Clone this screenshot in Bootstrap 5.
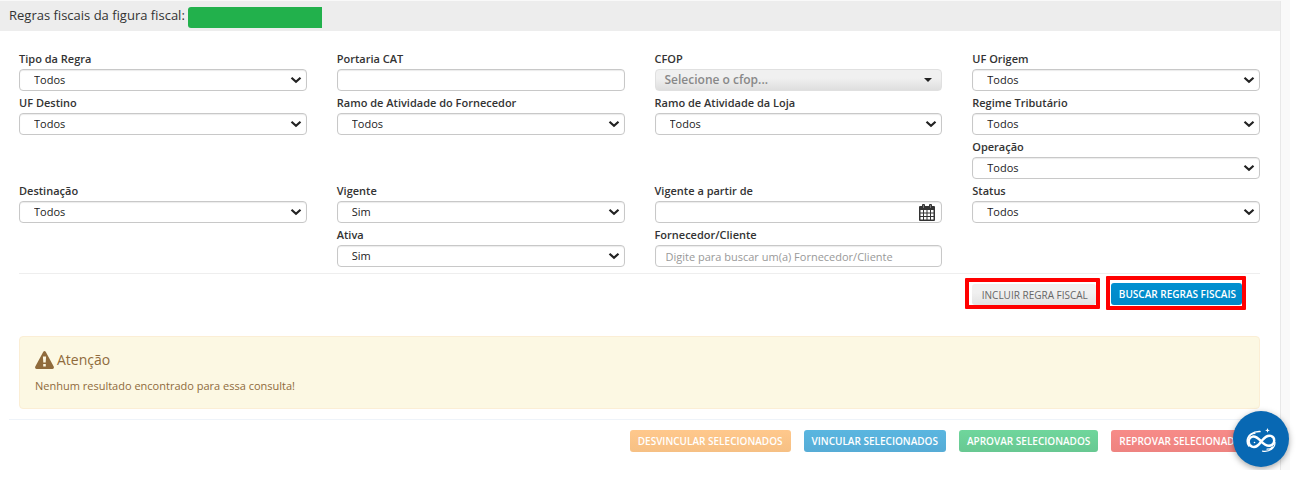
<!DOCTYPE html>
<html lang="pt-BR">
<head>
<meta charset="utf-8">
<meta name="viewport" content="width=device-width, initial-scale=1">
<title>Regras fiscais</title>
<link href="https://cdn.jsdelivr.net/npm/bootstrap@5.3.0/dist/css/bootstrap.min.css" rel="stylesheet">
<style>
  body { font-family: "Open Sans", "Noto Sans", sans-serif; font-size: 11px; color: #333; background: #fff; }
  .page-shell { margin-right: 7px; padding: 1px 9px 0 0; background: #f9f9f9; }
  .rules-panel { background: #fff; border-right: 1px solid #e8e8e8; padding-bottom: 18px; }
  .panel-title { background: #ededed; height: 30px; padding: 0 9px; font-size: 13px; gap: 3px; }
  .figure-name { width: 134px; height: 21px; background: #22b14c; border-radius: 3px 0 0 3px; margin-top: 3px; }
  .panel-content { padding: 16px 20px 0 19px; }
  .filters { --bs-gutter-x: 30px; }
  .form-label { display: block; margin: 0; font-weight: 600; line-height: 24px; height: 22px; color: #333; }
  .form-control, .form-select { height: 22px; min-height: 22px; padding: 0 10px; font-size: 11px; line-height: 20px; color: #222; border: 1px solid #c8c8c8; border-radius: 4px; box-shadow: inset 0 1px 1px rgba(0,0,0,.08); }
  .form-select { padding: 0 24px 0 14px; background-size: 12px 8px; background-position: right 4px top 6px;
    background-image: url("data:image/svg+xml,%3Csvg xmlns='http://www.w3.org/2000/svg' viewBox='0 0 12 8'%3E%3Cpath d='M1.5 1.7 6 5.7l4.5-4' fill='none' stroke='%23222' stroke-width='2.2'/%3E%3C/svg%3E"); }
  .form-control::placeholder { color: #999; }
  .cfop-toggle { width: 100%; height: 22px; padding: 0 9px; display: flex; align-items: center; justify-content: space-between; font-size: 12px; font-weight: 600; color: #888; border: 1px solid #e0e0e0; border-radius: 4px; background: linear-gradient(#f0f0f0 40%, #dedede); }
  .cfop-toggle::after { color: #222; border-top-width: 4px; border-left-width: 4px; border-right-width: 4px; }
  .date-field .form-control { padding-right: 28px; }
  .date-field button { right: 7px; top: 2px; width: 16px; height: 18px; line-height: 0; color: #333; }
  .rule { margin-top: 6px; border-top: 1px solid #eee; }
  .search-actions { padding-top: 2px; margin-right: 14px; gap: 6px; }
  .marked { border: 4px solid #f00; border-radius: 1px; }
  .marked-plain { margin-top: 2px; padding: 2px 0 0 3px; height: 31px; }
  .marked-main { padding: 3px 0 0 1px; height: 34px; }
  .btn-rule { height: 22px; padding: 0 8px; font-size: 10px; line-height: 22px; font-weight: 600; text-transform: uppercase; border: 0; border-radius: 3px; color: #fff; white-space: nowrap; }
  .btn-plain { height: 21px; padding: 0 8px 0 10px; font-weight: 500; color: #666; background: linear-gradient(#f0f0f0 40%, #e2e2e2); }
  .btn-main { padding: 0 6px 0 8px; background: linear-gradient(#0090d0, #0088c8); }
  .notice { margin: 26px 0 10px; padding: 12px 15px 14px; background: #fcf8e3; border: 1px solid #fbeed5; border-radius: 4px; color: #8f6b3c; }
  .notice h2 { margin: 0; font-size: 14px; font-weight: 400; line-height: 22px; gap: 3px; }
  .notice p { margin: 7px 0 0; line-height: 16px; }
  .bulk { margin-left: 9px; padding: 10px 24px 0 0; gap: 13px; border-top: 1px solid #eef3f9; }
  .btn-unlink { background: linear-gradient(#ffc88c, #f6c084); }
  .btn-link-sel { background: linear-gradient(#5ab6e0, #56acd6); }
  .btn-approve { background: linear-gradient(#6fd69c, #68c892); }
  .btn-reject { background: linear-gradient(#f78b88, #ee8380); }
  .assistant { right: 1px; bottom: 3px; width: 56px; height: 56px; background: #0868b3; box-shadow: 0 2px 6px rgba(0,0,0,.35); line-height: 0; }
</style>
</head>
<body>
<main class="page-shell position-relative">
  <section class="rules-panel">
    <header class="panel-title d-flex align-items-center"><span>Regras fiscais da figura fiscal:</span><span class="figure-name"></span></header>
    <div class="panel-content">
      <form>
        <div class="row filters">
          <div class="col-3"><label class="form-label" for="tipo">Tipo da Regra</label><select class="form-select" id="tipo"><option>Todos</option></select></div>
          <div class="col-3"><label class="form-label" for="portaria">Portaria CAT</label><input class="form-control" id="portaria" type="text"></div>
          <div class="col-3"><label class="form-label" for="cfop">CFOP</label><button class="cfop-toggle dropdown-toggle" id="cfop" type="button">Selecione o cfop...</button></div>
          <div class="col-3"><label class="form-label" for="origem">UF Origem</label><select class="form-select" id="origem"><option>Todos</option></select></div>
          <div class="col-3"><label class="form-label" for="destino">UF Destino</label><select class="form-select" id="destino"><option>Todos</option></select></div>
          <div class="col-3"><label class="form-label" for="ramof">Ramo de Atividade do Fornecedor</label><select class="form-select" id="ramof"><option>Todos</option></select></div>
          <div class="col-3"><label class="form-label" for="ramol">Ramo de Atividade da Loja</label><select class="form-select" id="ramol"><option>Todos</option></select></div>
          <div class="col-3"><label class="form-label" for="regime">Regime Tributário</label><select class="form-select" id="regime"><option>Todos</option></select></div>
          <div class="col-3 offset-9"><label class="form-label" for="operacao">Operação</label><select class="form-select" id="operacao"><option>Todos</option></select></div>
          <div class="col-3"><label class="form-label" for="destinacao">Destinação</label><select class="form-select" id="destinacao"><option>Todos</option></select></div>
          <div class="col-3"><label class="form-label" for="vigente">Vigente</label><select class="form-select" id="vigente"><option>Sim</option></select></div>
          <div class="col-3"><label class="form-label" for="apartir">Vigente a partir de</label>
            <div class="date-field position-relative"><input class="form-control" id="apartir" type="text">
              <button class="btn p-0 border-0 position-absolute" type="button" aria-label="Abrir calendário"><svg width="16" height="17" viewBox="0 0 16 17"><path fill="currentColor" d="M1 2h2V1q0-1 1-1h1q1 0 1 1v1h4V1q0-1 1-1h1q1 0 1 1v1h2q1 0 1 1v13q0 1-1 1H1q-1 0-1-1V3q0-1 1-1z"/><path fill="#fff" d="M1.500 6H4v2.500H1.500zM5 6h2.500v2.500H5zM8.500 6H11v2.500H8.500zM12 6h2.500v2.500H12zM1.500 9.500H4V12H1.500zM5 9.500h2.500V12H5zM8.500 9.500H11V12H8.500zM12 9.500h2.500V12H12zM1.500 13H4v2.500H1.500zM5 13h2.500v2.500H5zM8.500 13H11v2.500H8.500zM12 13h2.500v2.500H12z"/><path stroke="#aaa" stroke-width=".6" d="M4.500 1v3M11.500 1v3"/></svg></button></div></div>
          <div class="col-3"><label class="form-label" for="status">Status</label><select class="form-select" id="status"><option>Todos</option></select></div>
          <div class="col-3 offset-3"><label class="form-label" for="ativa">Ativa</label><select class="form-select" id="ativa"><option>Sim</option></select></div>
          <div class="col-3"><label class="form-label" for="fornecedor">Fornecedor/Cliente</label><input class="form-control" id="fornecedor" type="text" placeholder="Digite para buscar um(a) Fornecedor/Cliente"></div>
        </div>
        <div class="rule"></div>
        <div class="search-actions d-flex justify-content-end align-items-start">
          <div class="marked marked-plain"><button class="btn btn-rule btn-plain" type="button">Incluir regra fiscal</button></div>
          <div class="marked marked-main"><button class="btn btn-rule btn-main" type="submit">Buscar regras fiscais</button></div>
        </div>
      </form>
      <div class="notice" role="alert">
        <h2 class="d-flex align-items-center"><svg width="19" height="18" viewBox="0 0 19 18"><path fill="currentColor" fill-rule="evenodd" d="M8.300.8q1.200-1.500 2.400 0l8 14.700q.8 2-1.200 2.500h-16q-2-.5-1.200-2.500zM7.900 5.600l.4 6h2.400l.4-6zM8.200 13v2.600h2.600V13z"/></svg><span>Atenção</span></h2>
        <p>Nenhum resultado encontrado para essa consulta!</p>
      </div>
    </div>
    <div class="bulk d-flex justify-content-end">
      <button class="btn btn-rule btn-unlink" type="button">Desvincular selecionados</button>
      <button class="btn btn-rule btn-link-sel" type="button">Vincular selecionados</button>
      <button class="btn btn-rule btn-approve" type="button">Aprovar selecionados</button>
      <button class="btn btn-rule btn-reject" type="button">Reprovar selecionados</button>
    </div>
  </section>
  <button class="assistant btn rounded-circle p-0 border-0 position-absolute" type="button" aria-label="Assistente">
    <svg width="56" height="56" viewBox="0 0 56 56" fill="none" stroke="#fff" stroke-linecap="round"><path stroke-width="2.400" d="M28.500 30c-3.200 5-6.500 6.800-9.500 5.600-4.600-1.900-4.300-9 .6-10 3.800-.7 5.900 2.100 8.600 4.800 2.800 3 5.800 5 9.200 4.100 5-1.400 5-8.400.4-9.600-4.200-.9-6.500 2-9.300 5.100"/><path stroke-width="1.500" d="M27 20.600c-7-.3-12.800 3.800-12.800 9.600 0 1.600.5 3.500 1.600 4.700"/><path stroke-width="1.200" d="M15.500 26.500c1.200-2.400 3.900-4 6.500-4M42 31.500c0 5.500-5 9.700-12.500 8.600M39.500 36c-1.500 1.600-3.400 2.200-5.500 2.200"/><path fill="#fff" stroke="none" d="m34.500 17 .7 1.700 1.700.7-1.700.7-.7 1.700-.7-1.700-1.700-.7 1.700-.7z"/><circle cx="21.500" cy="31.500" r=".8" fill="#fff" stroke="none"/></svg>
  </button>
</main>
<script src="https://cdn.jsdelivr.net/npm/bootstrap@5.3.0/dist/js/bootstrap.bundle.min.js"></script>
</body>
</html>
